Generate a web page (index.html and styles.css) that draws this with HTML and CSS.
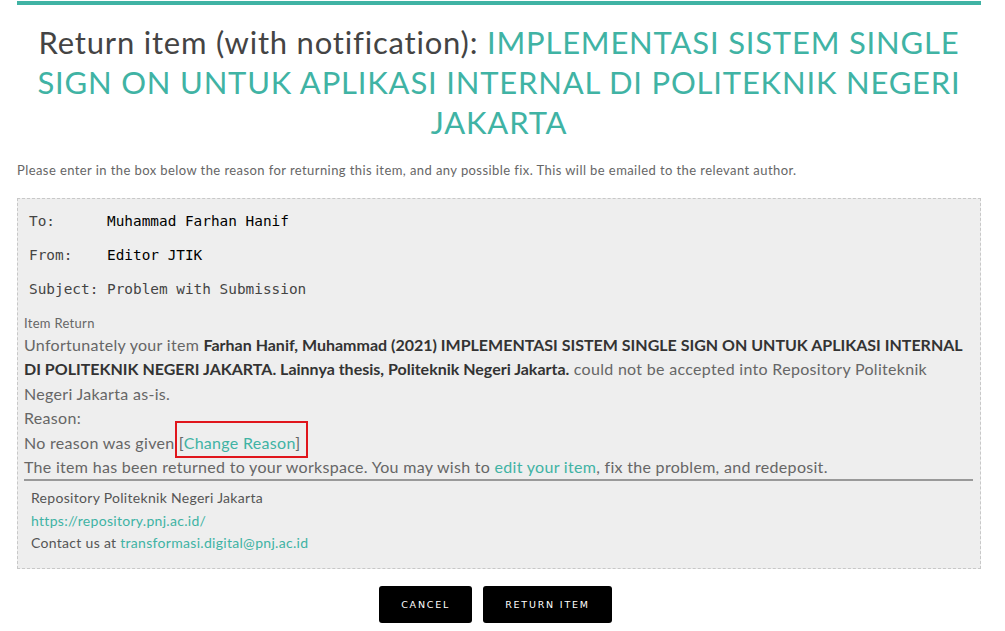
FILE: index.html
```html
<!DOCTYPE html>
<html>
<head>
<meta charset="utf-8">
<link rel="stylesheet" href="styles.css">
</head>
<body>
<div class="page">
  <div class="topbar"></div>
  <h1 class="title">Return item (with notification): <span class="accent">IMPLEMENTASI SISTEM SINGLE SIGN ON UNTUK APLIKASI INTERNAL DI POLITEKNIK NEGERI JAKARTA</span></h1>
  <p class="intro">Please enter in the box below the reason for returning this item, and any possible fix. This will be emailed to the relevant author.</p>
  <div class="mailbox">
    <div class="headers">
      <div class="hrow"><span class="hlabel">To:      </span><span class="hval">Muhammad Farhan Hanif</span></div>
      <div class="hrow"><span class="hlabel">From:    </span><span class="hval">Editor JTIK</span></div>
      <div class="hrow"><span class="hlabel">Subject: Problem with Submission</span></div>
    </div>
    <div class="msg-title">Item Return</div>
    <div class="msg">
      <p>Unfortunately your item <b>Farhan Hanif, Muhammad (2021) IMPLEMENTASI SISTEM SINGLE SIGN ON UNTUK APLIKASI INTERNAL DI POLITEKNIK NEGERI JAKARTA. Lainnya thesis, Politeknik Negeri Jakarta.</b> could not be accepted into Repository Politeknik Negeri Jakarta as-is.</p>
      <p>Reason:</p>
      <p>No reason was given <span class="mark">[<a href="#">Change Reason</a>]</span></p>
      <p>The item has been returned to your workspace. You may wish to <a href="#">edit your item</a>, fix the problem, and redeposit.</p>
    </div>
    <div class="sig">
      <p>Repository Politeknik Negeri Jakarta</p>
      <p><a href="#">https://repository.pnj.ac.id/</a></p>
      <p>Contact us at <a href="#">transformasi.digital@pnj.ac.id</a></p>
    </div>
  </div>
  <div class="actions">
    <button class="btn">CANCEL</button>
    <button class="btn">RETURN ITEM</button>
  </div>
</div>
</body>
</html>
```
FILE: styles.css
```css
html, body {
  margin: 0;
  padding: 0;
  background: #fff;
}
body {
  font-family: Lato, "Open Sans", sans-serif;
  color: #666;
}
.page {
  padding: 1px 24px 0 17px;
}
.topbar {
  height: 4px;
  background: #40b3a4;
}
.title {
  margin: 17px 0 0;
  font-weight: 400;
  font-size: 31px;
  line-height: 40px;
  text-align: center;
  color: #444;
  letter-spacing: 0.8px;
}
.accent {
  color: #40b3a4;
}
.intro {
  margin: 19px 0 0;
  font-size: 13px;
  line-height: 18px;
  color: #666;
  letter-spacing: 0.42px;
}
.mailbox {
  margin-top: 19px;
  background: #eee;
  border: 1px dashed #c8c8c8;
  padding: 5px 7px 13px 6px;
}
.headers {
  padding-left: 5px;
  font-family: "DejaVu Sans Mono", "Liberation Mono", monospace;
  font-size: 14.4px;
  line-height: 34px;
}
.hrow {
  white-space: pre;
}
.hlabel {
  color: #444;
}
.hval {
  color: #000;
}
.msg-title {
  margin-top: 7px;
  font-size: 13px;
  line-height: 20px;
  color: #666;
  letter-spacing: 0.3px;
}
.msg {
  font-size: 16px;
  line-height: 24.4px;
  color: #666;
  border-bottom: 2px solid #999;
  letter-spacing: 0.3px;
}
.msg p, .sig p {
  margin: 0;
}
.msg b {
  color: #333;
  font-weight: 700;
  letter-spacing: 0;
}
a {
  color: #40b3a4;
  text-decoration: none;
}
.mark {
  position: relative;
}
.mark::after {
  content: "";
  position: absolute;
  left: -4px;
  right: -8px;
  top: -12px;
  bottom: -6px;
  border: 2px solid #e0161c;
}
.sig {
  padding: 6px 0 0 7px;
  font-size: 14px;
  line-height: 22.5px;
  color: #555;
  letter-spacing: 0.3px;
}
.actions {
  display: flex;
  justify-content: center;
  gap: 11px;
  margin-top: 17px;
  padding-right: 7px;
}
.btn {
  background: #000;
  color: #fff;
  border: 0;
  border-radius: 3px;
  height: 37px;
  padding: 0 22px;
  font-family: "DejaVu Sans", sans-serif;
  font-size: 9.5px;
  letter-spacing: 1.8px;
}
```
